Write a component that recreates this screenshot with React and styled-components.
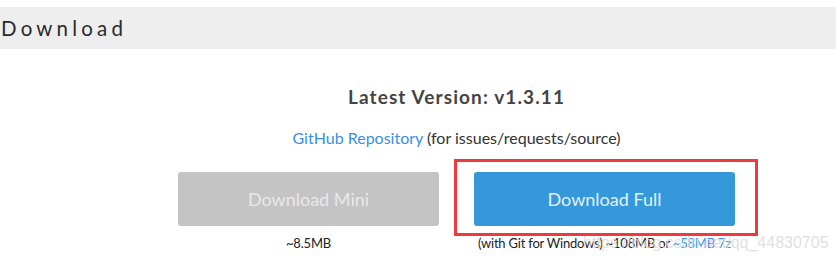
import React from "react"
import styled, { createGlobalStyle } from "styled-components"

const Global = createGlobalStyle`
  body {
    margin: 0;
    background: #fff;
    font-family: Lato, "Open Sans", sans-serif;
  }
`

const Page = styled.div`
  width: 837px;
  height: 260px;
  position: relative;
  overflow: hidden;
  padding-top: 7px;
  box-sizing: border-box;
`

const TitleBar = styled.div`
  height: 42px;
  width: 836px;
  background: #eeeeee;
  display: flex;
  align-items: center;
  padding-left: 1px;
  box-sizing: border-box;
`

const Title = styled.h2`
  margin: 0;
  font-size: 20.5px;
  font-weight: 400;
  letter-spacing: 4.2px;
  color: #2b2b2b;
`

const Content = styled.div`
  padding-left: 76px;
  display: flex;
  flex-direction: column;
  align-items: center;
`

const Version = styled.h3`
  margin: 36px 0 0;
  font-size: 19px;
  font-weight: 700;
  letter-spacing: 1.1px;
  color: #444;
  line-height: 24px;
`

const RepoLine = styled.p`
  margin: 19px 0 0;
  font-size: 16px;
  color: #333;
  line-height: 20px;
`

const Link = styled.a`
  color: #3a8ee6;
  text-decoration: none;
`

const Buttons = styled.div`
  display: flex;
  gap: 35px;
  margin-top: 24px;
`

const Column = styled.div`
  display: flex;
  flex-direction: column;
  align-items: center;
  position: relative;
`

const Button = styled.button`
  width: 261px;
  height: 54px;
  border: none;
  border-radius: 3px;
  font-family: Lato, sans-serif;
  font-size: 18px;
  background: ${p => (p.$primary ? "#3498db" : "#c4c4c4")};
  color: ${p => (p.$primary ? "#e6f0f9" : "#e8e8e8")};
`

const Caption = styled.div`
  margin-top: 8px;
  font-size: 13px;
  letter-spacing: -0.2px;
  color: #222;
  line-height: 18px;
`

const Highlight = styled.div`
  position: absolute;
  left: -20px;
  top: -13px;
  width: 304px;
  height: 77px;
  border: 3px solid #ec3a3d;
  box-sizing: border-box;
  pointer-events: none;
`

const Watermark = styled.div`
  position: absolute;
  left: 583px;
  top: 234px;
  font-family: "Liberation Sans", Arial, sans-serif;
  font-size: 16px;
  color: rgba(218, 218, 218, 0.85);
  white-space: nowrap;
`

export default function App() {
  return (
    <Page>
      <Global />
      <TitleBar>
        <Title>Download</Title>
      </TitleBar>
      <Content>
        <Version>Latest Version: v1.3.11</Version>
        <RepoLine>
          <Link href="#">GitHub Repository</Link> (for issues/requests/source)
        </RepoLine>
        <Buttons>
          <Column>
            <Button>Download Mini</Button>
            <Caption>~8.5MB</Caption>
          </Column>
          <Column>
            <Highlight />
            <Button $primary>Download Full</Button>
            <Caption>
              (with Git for Windows) ~108MB or <Link href="#">~58MB 7z</Link>
            </Caption>
          </Column>
        </Buttons>
      </Content>
      <Watermark>https://blog.csdn.net/qq_44830705</Watermark>
    </Page>
  )
}
